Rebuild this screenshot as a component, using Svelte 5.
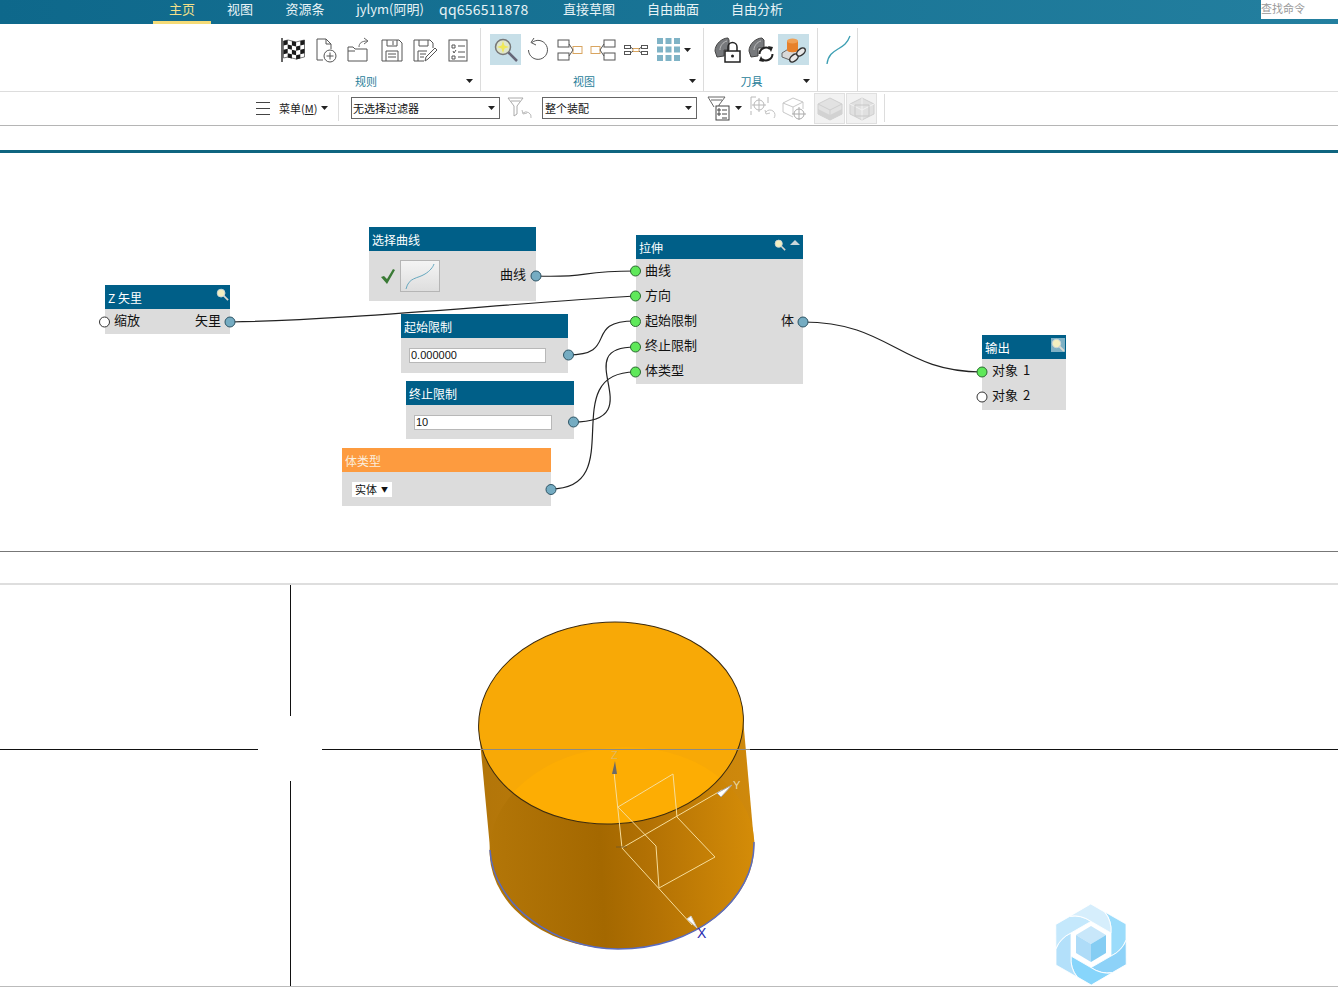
<script>
  const tabs = [
    { label: '主页', w: 58, active: true },
    { label: '视图', w: 58 },
    { label: '资源条', w: 72 },
    { label: 'jylym(阿明)', w: 98 },
    { label: 'qq656511878', w: 108, latin: true },
    { label: '直接草图', w: 84 },
    { label: '自由曲面', w: 84 },
    { label: '自由分析', w: 84 }
  ]

  const nodes = [
    { id: 'z', title: 'Z 矢里', x: 105, y: 285, w: 125, h: 49 },
    { id: 'curve', title: '选择曲线', x: 369, y: 227, w: 167, h: 74 },
    { id: 'start', title: '起始限制', x: 401, y: 314, w: 167, h: 59, fw: 137 },
    { id: 'end', title: '终止限制', x: 406, y: 381, w: 168, h: 58, fw: 138 },
    { id: 'type', title: '体类型', x: 342, y: 448, w: 209, h: 58, orange: true },
    { id: 'extrude', title: '拉伸', x: 636, y: 235, w: 167, h: 149 },
    { id: 'out', title: '输出', x: 982, y: 335, w: 84, h: 75 }
  ]

  const wires = [
    'M536 276 C592 278 575 271 635 271',
    'M230 322 C350 320 500 304 635 296',
    'M568 355 C620 355 582 321 635 321',
    'M573 422 C655 422 565 347 635 347',
    'M551 489 C630 489 555 372 635 372',
    'M803 322 C890 322 900 372 982 372'
  ]

  const pins = [
    { x: 104.5, y: 322, c: 'off' }, { x: 230, y: 322, c: 'out' },
    { x: 536, y: 276, c: 'out' }, { x: 568.5, y: 355, c: 'out' },
    { x: 573.5, y: 422, c: 'out' }, { x: 551, y: 489.5, c: 'out' },
    { x: 635.5, y: 271, c: 'on' }, { x: 635.5, y: 296, c: 'on' },
    { x: 635.5, y: 321.5, c: 'on' }, { x: 635.5, y: 347, c: 'on' },
    { x: 635.5, y: 372, c: 'on' }, { x: 803, y: 322, c: 'out' },
    { x: 982, y: 372, c: 'on' }, { x: 982, y: 397, c: 'off' }
  ]

  // logo petals, clockwise from the upper right
  const petals = [
    { a: 0, c: '#9bdcfb' },
    { a: 60, c: '#8dd2f8' },
    { a: 120, c: '#87d5fb' },
    { a: 180, c: '#b3e0fa' },
    { a: 240, c: '#c4e8fc' },
    { a: 300, c: '#d6eefc' }
  ]

  // black squares of the checkered flag, with a small wave
  const wave = [1, 0, 1, 2, 1, 0]
  const flagCells = []
  for (let r = 0; r < 4; r++) {
    for (let c = 0; c < 5; c++) {
      if ((r + c) % 2 === 0) {
        const x = 3.5 + c * 4.2
        const y = 3 + r * 4.4
        flagCells.push(`M${x} ${y + wave[c]}L${x + 4.2} ${y + wave[c + 1]}V${y + 4.4 + wave[c + 1]}L${x} ${y + 4.4 + wave[c]}Z`)
      }
    }
  }
</script>

{#snippet mag(size)}
  <svg class="mag" width={size} height={size} viewBox="0 0 14 14">
    <circle cx="5.5" cy="5.5" r="4.2" fill="#f3efc0" stroke="#c8d4d8"/>
    <line x1="8.5" y1="8.5" x2="13" y2="13" stroke="#d8d8d0" stroke-width="1.8"/>
  </svg>
{/snippet}

{#snippet caret()}
  <svg class="caret" width="7" height="4" viewBox="0 0 7 4"><path d="M0 0H7L3.5 4Z" fill="#222"/></svg>
{/snippet}

<div class="page">
  <nav class="tabs">
    <div class="tab-list">
      {#each tabs as t}
        <span class="tab" class:active={t.active} class:latin={t.latin} style="width:{t.w}px">{t.label}</span>
      {/each}
    </div>
    <div class="search">查找命令</div>
  </nav>

  <section class="ribbon">
    <div class="group g1">
      <div class="icons">
        <svg width="26" height="26" viewBox="0 0 26 26">
          <path d="M2 1V25" stroke="#333" stroke-width="1.5"/>
          <path d="M3.500 4L8 3L12 4L16 5L20 4L24.500 3V20L20 21L16 22L12 21L8 20L3.500 21Z" fill="#fff" stroke="#444" stroke-width=".7"/>
          {#each flagCells as d}
            <path {d} fill="#1a1a1a"/>
          {/each}
        </svg>
        <svg width="26" height="26" viewBox="0 0 26 26" fill="none" stroke="#555">
          <path d="M4 23V2H13L18 7V12M13 2V7H18M4 23H10"/>
          <circle cx="17" cy="19" r="6" fill="#fff"/>
          <path d="M17 15.500V22.500M13.500 19H20.500"/>
        </svg>
        <svg width="26" height="26" viewBox="0 0 26 26" fill="none" stroke="#555">
          <path d="M2 24V10H7L9 12H21V24ZM2 14H9"/>
          <path d="M13 10C13 6 16 4 21 4M18 1L22 4L18 7" stroke="#666"/>
        </svg>
        <svg width="26" height="26" viewBox="0 0 26 26" fill="none" stroke="#555">
          <path d="M3 3H20L23 6V24H3ZM8 3V9H18V3M14 4V8M7 24V14H19V24M9 17H17M9 20H17"/>
        </svg>
        <svg width="26" height="26" viewBox="0 0 26 26" fill="none" stroke="#555">
          <path d="M2 3H18L21 6V11M7 3V9H16V3M2 3V24H12M6 24V14H15M8 17H14M8 20H12"/>
          <path d="M13 24L14 20L23 11L25 13L16 22Z" fill="#fff"/>
        </svg>
        <svg width="26" height="26" viewBox="0 0 26 26" fill="none" stroke="#555">
          <rect x="4" y="3" width="18" height="21"/>
          <path d="M7 8H10V11H7ZM13 9H20M8 14L9 16L11 13M13 15H20M7 19H10V22H7ZM13 20H20"/>
        </svg>
      </div>
      <div class="group-label"><span>规则</span>{@render caret()}</div>
    </div>

    <div class="group g2">
      <div class="icons">
        <span class="pressed">
          <svg width="26" height="26" viewBox="0 0 26 26">
            <circle cx="10" cy="10" r="7.500" fill="#dfe6cc" stroke="#777" stroke-width="1.500"/>
            <path d="M10 4L11.500 8.500L16 10L11.500 11.500L10 16L8.500 11.500L4 10L8.500 8.500Z" fill="#f0e858"/>
            <line x1="15.500" y1="15.500" x2="24" y2="24" stroke="#667" stroke-width="2.500"/>
          </svg>
        </span>
        <svg width="26" height="26" viewBox="0 0 26 26" fill="none" stroke="#555">
          <path d="M8 5.500A9.500 9.500 0 1 1 4.500 13"/>
          <path d="M10 1L7 5.500L12 8"/>
        </svg>
        <svg width="26" height="26" viewBox="0 0 26 26" fill="none" stroke="#555">
          <rect x="1" y="3" width="11" height="7"/>
          <rect x="1" y="16" width="11" height="7"/>
          <rect x="16" y="9.500" width="9" height="7" stroke="#d9a560"/>
          <path d="M12 7L16 13L12 19"/>
        </svg>
        <svg width="26" height="26" viewBox="0 0 26 26" fill="none" stroke="#555">
          <rect x="1" y="9.500" width="9" height="7" stroke="#d9a560"/>
          <rect x="14" y="3" width="11" height="7"/>
          <rect x="14" y="16" width="11" height="7"/>
          <path d="M14 7L10 13L14 19"/>
        </svg>
        <svg width="26" height="26" viewBox="0 0 26 26" fill="none" stroke="#555">
          <rect x="1.500" y="8.500" width="6" height="3"/>
          <rect x="1.500" y="14.500" width="6" height="3"/>
          <rect x="18.500" y="8.500" width="6" height="3"/>
          <rect x="18.500" y="14.500" width="6" height="3"/>
          <rect x="10" y="11.500" width="6" height="3" stroke="#d9a560"/>
          <path d="M7.500 10L10 12M7.500 16L10 14M16 12L18.500 10M16 14L18.500 16"/>
        </svg>
        <span class="with-caret">
          <svg width="24" height="24" viewBox="0 0 24 24" fill="#7fb3c6">
            {#each [0, 8.500, 17] as y}
              {#each [1, 9.500, 18] as x}
                <rect {x} {y} width="6" height="6"/>
              {/each}
            {/each}
          </svg>
          {@render caret()}
        </span>
      </div>
      <div class="group-label"><span>视图</span>{@render caret()}</div>
    </div>

    <div class="group g3">
      <div class="icons">
        <svg width="27" height="27" viewBox="0 0 27 27">
          <path d="M1 15C1 8 8 2 14 2L15 4V14H10V20L3 21Z" fill="#77797c" stroke="#444"/>
          <path d="M6 14C6 10 9 6 13 5" stroke="#bbb" fill="none"/>
          <path d="M14 15V11A4.500 4.500 0 0 1 23 11V15" fill="none" stroke="#222" stroke-width="1.500"/>
          <rect x="11" y="15" width="15" height="11" fill="#fff" stroke="#222" stroke-width="1.500"/>
          <circle cx="18.500" cy="20" r="1.500" fill="#222"/>
        </svg>
        <svg width="27" height="27" viewBox="0 0 27 27">
          <path d="M1 15C1 8 8 2 14 2L16 4V12H10V20L3 21Z" fill="#77797c" stroke="#444"/>
          <path d="M6 14C6 10 9 6 13 5" stroke="#bbb" fill="none"/>
          <path d="M11.500 18A6.500 6.500 0 0 1 22 13" fill="none" stroke="#222" stroke-width="2"/>
          <path d="M24.500 18A6.500 6.500 0 0 1 14 23" fill="none" stroke="#222" stroke-width="2"/>
          <path d="M20 10L25 11L23 16Z" fill="#222"/>
          <path d="M16 26L11 25L13 20Z" fill="#222"/>
        </svg>
        <span class="pressed tool">
          <svg width="26" height="26" viewBox="0 0 26 26">
            <path d="M1 16L9 11L20 14V18L9 23L1 20Z" fill="#d8d8d8" stroke="#666"/>
            <path d="M6 4V13C6 16 17 16 17 13V4Z" fill="#e7812b"/>
            <ellipse cx="11.500" cy="4" rx="5.500" ry="2.500" fill="#f0a055"/>
            <g fill="none" stroke="#333" stroke-width="1.500">
              <ellipse cx="13" cy="21" rx="5" ry="3" transform="rotate(-40 13 21)" fill="#e8e8e8"/>
              <ellipse cx="20" cy="15" rx="5" ry="3" transform="rotate(-40 20 15)" fill="#e8e8e8"/>
            </g>
          </svg>
        </span>
      </div>
      <div class="group-label"><span>刀具</span>{@render caret()}</div>
    </div>

    <div class="group g4">
      <div class="icons">
        <svg width="26" height="30" viewBox="0 0 26 30" fill="none">
          <path d="M2 29C3 20 8 17 13 14S22 9 25 1" stroke="#3d9fb3" stroke-width="1.300"/>
        </svg>
      </div>
    </div>
  </section>

  <section class="toolbar">
    <div class="menu">
      <span class="burger"><i></i><i></i><i></i></span>
      <span class="menu-text">菜单(<u>M</u>)</span>
      {@render caret()}
    </div>
    <div class="select w1"><span>无选择过滤器</span>{@render caret()}</div>
    <svg class="faded f1" width="26" height="24" viewBox="0 0 26 24" fill="none" stroke="#aaa">
      <path d="M1 2H16L10 10V18L7 20V10ZM4 5H13"/>
      <path d="M24 22A5 5 0 0 0 16 17M15 14L16 18L20 17" stroke="#bbb"/>
    </svg>
    <div class="select w2"><span>整个装配</span>{@render caret()}</div>
    <span class="filter">
      <svg width="26" height="26" viewBox="0 0 26 26" fill="none" stroke="#444">
        <path d="M1 2H18L12 10V14M7 12L1 2M4 5H15" stroke="#666"/>
        <rect x="9" y="11" width="13" height="14" fill="#fff"/>
        <path d="M11 14H13V16H11ZM15 15H20M11 18H13V20H11ZM15 19H20M15 23H20" />
      </svg>
      {@render caret()}
    </span>
    <svg class="faded f2" width="26" height="26" viewBox="0 0 26 26" fill="none" stroke="#b8b8b8">
      <path d="M1 14V2H6M18 2V8M1 20V16"/>
      <circle cx="9" cy="10" r="5"/>
      <path d="M9 3V17M2 10H16"/>
      <path d="M24 23A5 5 0 0 0 16 17M15 15L16 19L20 18" stroke="#c4c4c4"/>
    </svg>
    <svg class="faded f3" width="26" height="26" viewBox="0 0 26 26" fill="none" stroke="#c8c8c8">
      <path d="M1 8L11 3L21 7V14M1 8V17L11 22M1 8L11 12L21 7M11 12V19"/>
      <circle cx="17" cy="19" r="5" stroke="#aaa"/>
      <path d="M17 12V25M10 19H24" stroke="#aaa"/>
    </svg>
    <div class="cube-btn first">
      <svg width="28" height="28" viewBox="0 0 28 28">
        <path d="M14 4L26 10V20L14 26L2 20V10Z" fill="#e2e2e2" stroke="#d0d0d0"/>
        <path d="M2 10L14 16L26 10M14 16V26" fill="none" stroke="#cfcfcf"/>
        <path d="M2 15L14 21L26 15V20L14 26L2 20Z" fill="#d2d2d2"/>
      </svg>
    </div>
    <div class="cube-btn">
      <svg width="28" height="28" viewBox="0 0 28 28">
        <path d="M14 4L26 10V20L14 26L2 20V10Z" fill="#e0e0e0" stroke="#cfcfcf"/>
        <path d="M14 4V16M2 10L14 16L26 10M14 16V26" fill="none" stroke="#f2f2f2"/>
        <path d="M7 11H21V22H7Z" fill="none" stroke="#c8c8c8"/>
      </svg>
    </div>
    <div class="sep end"></div>
  </section>

  <div class="spacer"></div>

  <main class="canvas">
    {#each nodes as n}
      <div class="node" class:orange={n.orange} style="left:{n.x}px;top:{n.y - 153}px;width:{n.w}px;height:{n.h}px">
        <header class={n.id}>
          <span>{n.title}</span>
          {#if n.id === 'z'}<span class="z-mag">{@render mag(13)}</span>{/if}
          {#if n.id === 'extrude'}
            <span class="head-icons">{@render mag(12)}<i class="tri"></i></span>
          {/if}
          {#if n.id === 'out'}
            <span class="out-mag">{@render mag(14)}</span>
          {/if}
        </header>
        <div class="node-body">
          {#if n.id === 'z'}
            <div class="row"><span>缩放</span><span>矢里</span></div>
          {:else if n.id === 'curve'}
            <div class="curve-body">
              <svg class="check" width="14" height="15" viewBox="0 0 14 15">
                <path d="M0 8L3 7L6 10L12 0L14 1L6 15Z" fill="#3a7a35"/>
              </svg>
              <span class="curve-btn">
                <svg width="38" height="30" viewBox="0 0 38 30" fill="none">
                  <path d="M5 28C8 16 16 18 24 13C29 10 32 6 33 3" stroke="#66a8bf"/>
                </svg>
              </span>
              <span class="curve-out">曲线</span>
            </div>
          {:else if n.id === 'start' || n.id === 'end'}
            <div class="input-row"><div class="field" style="width:{n.fw}px">{n.id === 'start' ? '0.000000' : '10'}</div></div>
          {:else if n.id === 'type'}
            <div class="input-row"><div class="dropdown"><span>实体</span><b>▼</b></div></div>
          {:else if n.id === 'extrude'}
            <div class="list">
              <div>曲线</div><div>方向</div>
              <div class="row"><span>起始限制</span><span>体</span></div>
              <div>终止限制</div><div>体类型</div>
            </div>
          {:else if n.id === 'out'}
            <div class="list objects"><div>对象 1</div><div>对象 2</div></div>
          {/if}
        </div>
      </div>
    {/each}

    <svg class="wires" width="1338" height="398" viewBox="0 153 1338 398">
      {#each wires as d}
        <path {d} fill="none" stroke="#222" stroke-width="1.200"/>
      {/each}
      {#each pins as p}
        <circle cx={p.x} cy={p.y} r="5" class={p.c}/>
      {/each}
    </svg>
  </main>

  <div class="strip"></div>

  <section class="viewport">
    <svg class="scene" width="1338" height="401" viewBox="0 585 1338 401">
      <defs>
        <linearGradient id="side" gradientUnits="userSpaceOnUse" x1="489" x2="754" y1="0" y2="0">
          <stop offset="0" stop-color="#b37608"/>
          <stop offset="0.42" stop-color="#a46800"/>
          <stop offset="0.62" stop-color="#b47204"/>
          <stop offset="1" stop-color="#d48c08"/>
        </linearGradient>
        <linearGradient id="wall" gradientUnits="userSpaceOnUse" x1="479" x2="755" y1="0" y2="0">
          <stop offset="0" stop-color="#b27509"/>
          <stop offset="1" stop-color="#cf890c"/>
        </linearGradient>
        <clipPath id="top-face">
          <ellipse cx="611" cy="723" rx="132.500" ry="101" transform="rotate(-3 611 723)"/>
        </clipPath>
      </defs>

      <line x1="290.500" y1="585" x2="290.500" y2="716" stroke="#111"/>
      <line x1="290.500" y1="781" x2="290.500" y2="986" stroke="#111"/>
      <line x1="0" y1="749.500" x2="258" y2="749.500" stroke="#111"/>
      <line x1="322" y1="749.500" x2="1338" y2="749.500" stroke="#111"/>

      <path d="M479 730L490 848L754 842L743 718Z" fill="url(#wall)"/>
      <ellipse cx="622" cy="848" rx="132.500" ry="101" transform="rotate(-3 622 848)" fill="url(#side)"/>
      <path d="M490 850C493 905 555 949 618 949C695 949 755 900 754 842" fill="none" stroke="#5a6cc0" stroke-width="1.500"/>

      <ellipse cx="611" cy="723" rx="132.500" ry="101" transform="rotate(-3 611 723)" fill="#f8a906"/>
      <g clip-path="url(#top-face)">
        <ellipse cx="622" cy="848" rx="132.500" ry="101" transform="rotate(-3 622 848)" fill="#fdad03"/>
      </g>
      <ellipse cx="611" cy="723" rx="132.500" ry="101" transform="rotate(-3 611 723)" fill="none" stroke="#3a2a10"/>
      <line x1="480" y1="749.500" x2="750" y2="749.500" stroke="#8d8a82"/>

      <g fill="none" stroke="#f6dd9a" stroke-width="1">
        <path d="M614 772L622 848L692 925"/>
        <path d="M622 848L722 790"/>
        <path d="M618 807L673 774L677 817L715 857L659 888L656 846Z"/>
      </g>
      <path d="M615 761L612 774H617Z" fill="#6a6a6a"/>
      <path d="M616 847H627" stroke="#7a5a20"/>
      <text x="611" y="759" class="axis faint">Z</text>
      <path d="M717 793L732 785L721 797Z" fill="#fff" stroke="#aaa"/>
      <text x="733" y="789" class="axis">Y</text>
      <path d="M687 919L691 916L697 928Z" fill="#fff" stroke="#ccc"/>
      <text x="697" y="938" class="axis-x">X</text>

      <g transform="translate(1055 904)">
        {#each petals as p}
          <path
            d="M50 8L71 20L71 36Q66.850 46.900 56 52L56 29Q57 17 50 8Z"
            fill={p.c}
            stroke="#fff"
            stroke-width=".8"
            transform="rotate({p.a} 36 40.500)"
          />
        {/each}
        <path d="M36 22L51 31L36 40L21 31Z" fill="#c8e7fa"/>
        <path d="M21 31L36 40V58L21 49Z" fill="#aedcf8"/>
        <path d="M51 31L36 40V58L51 49Z" fill="#85cdf3"/>
      </g>
    </svg>
  </section>
</div>

<style>
  :global(body) {
    margin: 0;
    background: #fff;
    overflow: hidden;
  }

  .page {
    width: 1338px;
    height: 998px;
    font-family: "Noto Sans CJK SC", "Liberation Sans", sans-serif;
    color: #222;
    display: flex;
    flex-direction: column;
  }

  .tabs {
    height: 24px;
    flex: none;
    display: flex;
    justify-content: space-between;
    background: linear-gradient(90deg, #0e688b, #237f9f);
    color: #e8f3f6;
    font-size: 13px;
  }

  .tab-list {
    display: flex;
    padding-left: 153px;
  }

  .tab {
    text-align: center;
    line-height: 18px;
    box-sizing: border-box;
    white-space: nowrap;
  }

  .tab.latin {
    font-size: 14px;
    letter-spacing: 0.2px;
    text-align: left;
  }

  .tab.active {
    color: #f2e08a;
    border-bottom: 3px solid #f5db77;
    height: 24px;
  }

  .search {
    width: 77px;
    height: 19px;
    background: #fff;
    color: #999;
    font-size: 11px;
    line-height: 17px;
  }

  .ribbon {
    height: 68px;
    flex: none;
    display: flex;
    padding-left: 280px;
    box-sizing: border-box;
    border-bottom: 1px solid #ddd;
  }

  .group {
    display: flex;
    flex-direction: column;
    border-right: 1px solid #dcdcdc;
    height: 63px;
    margin-top: 4px;
    box-sizing: border-box;
  }

  .g1 { width: 201px; }
  .g2 { width: 223px; padding-left: 12px; }
  .g3 { width: 114px; padding-left: 10px; }
  .g4 { width: 40px; padding-left: 7px; }

  .icons {
    display: flex;
    align-items: center;
    height: 43px;
    gap: 7px;
  }

  .pressed {
    width: 31px;
    height: 31px;
    background: #c7dfe8;
    display: flex;
    align-items: center;
    justify-content: center;
    margin: 0 -4px 0 -3px;
  }

  .pressed.tool {
    margin-left: -4px;
  }

  .with-caret {
    display: flex;
    align-items: center;
    gap: 4px;
  }

  .group-label {
    position: relative;
    flex: 1;
    display: flex;
    align-items: center;
    justify-content: center;
    padding-right: 28px;
    font-size: 11px;
    color: #1f7d99;
  }

  .group-label .caret {
    position: absolute;
    right: 7px;
    top: 8px;
  }

  .toolbar {
    height: 34px;
    flex: none;
    display: flex;
    align-items: center;
    border-bottom: 1px solid #b5b5b5;
    box-sizing: border-box;
    padding: 0 0 1px 256px;
  }

  .menu {
    display: flex;
    align-items: center;
    width: 83px;
    height: 26px;
    border-right: 1px solid #ddd;
    font-size: 11px;
    box-sizing: border-box;
  }

  .burger {
    display: flex;
    flex-direction: column;
    gap: 5px;
    width: 14px;
    margin-right: 9px;
  }

  .burger i {
    height: 1px;
    background: #444;
  }

  .menu-text {
    margin-right: 4px;
  }

  .select {
    height: 22px;
    box-sizing: border-box;
    border: 1px solid #666;
    display: flex;
    align-items: center;
    justify-content: space-between;
    padding: 0 4px 0 1px;
    font-size: 11px;
    line-height: 18px;
    color: #111;
  }

  .w1 { width: 149px; margin-left: 12px; }
  .w2 { width: 155px; margin-left: 9px; padding-left: 2px; }

  .f1 { margin-left: 7px; }
  .f2 { margin-left: 8px; }
  .f3 { margin-left: 6px; }

  .filter {
    display: flex;
    align-items: center;
    gap: 2px;
    margin: 0 0 0 10px;
  }

  .cube-btn {
    width: 31px;
    height: 31px;
    background: #f2f2f2;
    border: 1px solid #e0e0e0;
    box-sizing: border-box;
    display: flex;
    align-items: center;
    justify-content: center;
    margin-left: 1px;
  }

  .cube-btn.first { margin-left: 6px; }

  .sep.end {
    width: 1px;
    height: 28px;
    background: #ddd;
    margin-left: 7px;
  }

  .spacer {
    height: 24px;
    flex: none;
    border-bottom: 3px solid #0f6580;
    box-sizing: content-box;
  }

  .canvas {
    position: relative;
    height: 398px;
    flex: none;
    border-bottom: 1px solid #777;
  }

  .wires {
    position: absolute;
    left: 0;
    top: 0;
    pointer-events: none;
  }

  circle.off { fill: #fff; stroke: #333; }
  circle.on { fill: #5fe85a; stroke: #2a6a30; }
  circle.out { fill: #75acc2; stroke: #2e5566; }

  .node {
    position: absolute;
    background: #dcdcdc;
    font-size: 13px;
    color: #111;
  }

  .node header {
    height: 24px;
    background: #005f88;
    color: #fff;
    display: flex;
    align-items: center;
    justify-content: space-between;
    padding: 2px 3px 0;
    box-sizing: border-box;
    font-size: 12px;
    line-height: 22px;
  }

  .node header.z { padding-right: 1px; }
  .node header.out { padding-right: 1px; font-size: 12.5px; }

  .node.orange header {
    background: #fd9b3f;
    color: #fbeedd;
  }

  .z-mag {
    display: flex;
    margin-top: -8px;
  }

  .head-icons {
    display: flex;
    align-items: flex-start;
    gap: 4px;
    height: 20px;
    padding-top: 1px;
    box-sizing: border-box;
  }

  .tri {
    width: 0;
    height: 0;
    margin-top: 1px;
    border: 5px solid transparent;
    border-top: 0;
    border-bottom: 5px solid #c9d6da;
  }

  .out-mag {
    display: flex;
    background: #7fb1c4;
    margin-bottom: 6px;
  }

  .node-body {
    height: calc(100% - 24px);
    box-sizing: border-box;
  }

  .row {
    display: flex;
    justify-content: space-between;
    padding: 0 9px;
    line-height: 22px;
  }

  .curve-body {
    display: flex;
    align-items: center;
    height: 100%;
    padding: 0 10px 0 12px;
    box-sizing: border-box;
  }

  .curve-btn {
    width: 40px;
    height: 32px;
    margin-left: 5px;
    background: linear-gradient(#f4f4f4, #dedede);
    border: 1px solid #b5b5b5;
    box-sizing: border-box;
    display: flex;
    align-items: center;
    justify-content: center;
  }

  .curve-out {
    margin-left: auto;
    margin-top: -5px;
  }

  .input-row {
    height: 100%;
    display: flex;
    align-items: center;
    padding-left: 8px;
  }

  .field {
    height: 15px;
    background: #fff;
    border: 1px solid #b8b8b8;
    box-sizing: border-box;
    font: 11px/13px "Liberation Sans", sans-serif;
    padding-left: 1px;
  }

  .dropdown {
    display: flex;
    justify-content: space-between;
    width: 40px;
    background: #fff;
    padding: 0 4px 0 3px;
    box-sizing: border-box;
    height: 15px;
    line-height: 15px;
    font-size: 11px;
    margin-left: 2px;
  }

  .dropdown b { font-size: 7px; font-weight: 400; }

  .list { padding: 0 9px; line-height: 25px; margin-top: -2px; }

  .list .row { padding: 0; line-height: 25px; }

  .list.objects { padding-left: 10px; word-spacing: 2px; }

  .strip {
    height: 31px;
    flex: none;
    border-bottom: 2px solid #dedede;
  }

  .viewport {
    position: relative;
    height: 401px;
    flex: none;
    border-bottom: 1px solid #bbb;
    box-sizing: content-box;
    overflow: hidden;
  }

  .scene {
    display: block;
  }

  .axis { font: 11px "Liberation Sans", sans-serif; fill: #e9d9a8; }
  .axis.faint { fill: #e0b860; }
  .axis-x { font: 14px "Liberation Sans", sans-serif; fill: #2b2db0; }
</style>
